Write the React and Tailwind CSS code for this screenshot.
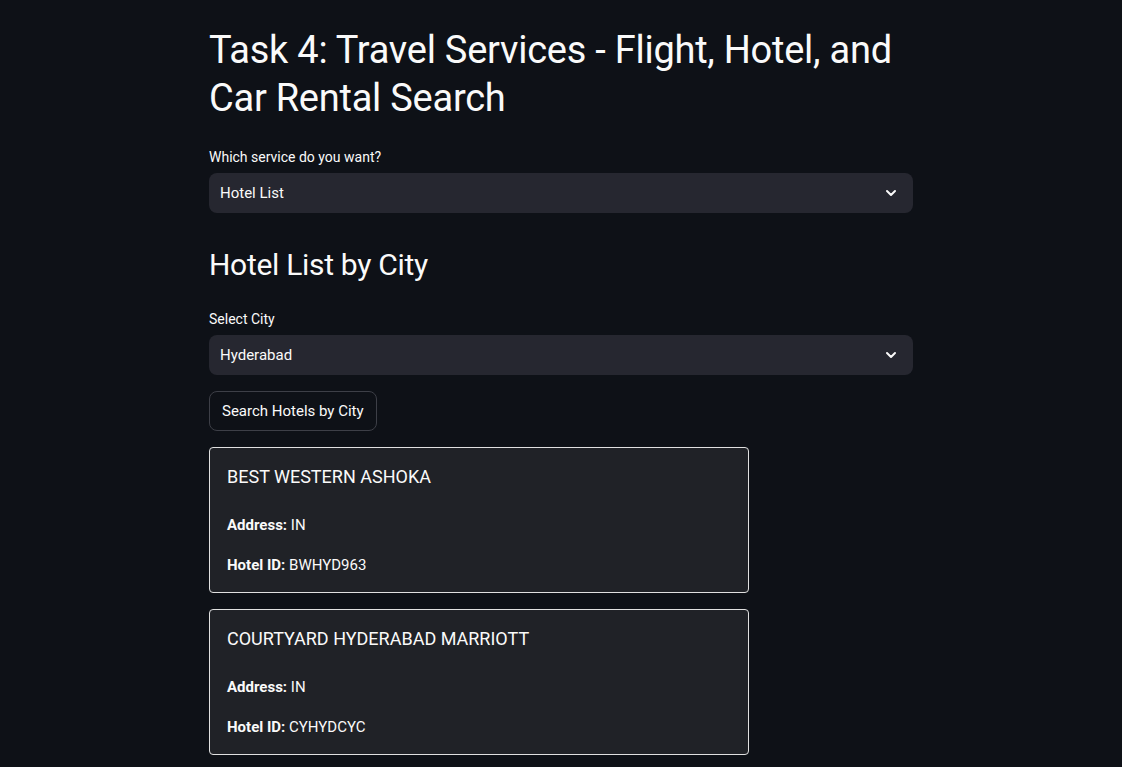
import React from 'react'
import { ChevronDown } from 'lucide-react'

const font = { fontFamily: 'Roboto, "Liberation Sans", sans-serif' }

function SelectBox({ label, value }) {
  return (
    <div className="flex flex-col">
      <label className="text-[14px] leading-[20px] text-[#fafafa] mb-[6px]">{label}</label>
      <div className="flex items-center justify-between h-[40px] rounded-lg bg-[#262730] pl-[11px] pr-[14px] text-[15px] text-[#fafafa]">
        <span>{value}</span>
        <ChevronDown className="w-[16px] h-[16px] text-[#fafafa]" strokeWidth={3} />
      </div>
    </div>
  )
}

function HotelCard({ name, address, id }) {
  return (
    <div className="w-[540px] rounded-[4px] border border-[#e0e0e0] bg-[#202227] px-[17px] pt-[15px] pb-[15px] text-[#fafafa]">
      <div className="text-[18px] leading-[28px]">{name}</div>
      <p className="mt-[22px] text-[15px] leading-[24px]">
        <b className="font-bold">Address:</b> {address}
      </p>
      <p className="mt-[16px] text-[15px] leading-[24px]">
        <b className="font-bold">Hotel ID:</b> {id}
      </p>
    </div>
  )
}

export default function App() {
  return (
    <div className="min-h-[767px] bg-[#0e1117] text-[#fafafa]" style={font}>
      <div className="w-[704px] ml-[209px] pt-[26px] pb-[20px]">
        {/* Title */}
        <h1 className="text-[38px] leading-[48px] font-normal tracking-[-0.25px]">
          Task 4: Travel Services - Flight, Hotel, and Car Rental Search
        </h1>

        <div className="mt-[25px]">
          <SelectBox label="Which service do you want?" value="Hotel List" />
        </div>

        <h2 className="mt-[30px] text-[30px] leading-[44px] font-normal tracking-[-0.3px]">Hotel List by City</h2>

        <div className="mt-[22px]">
          <SelectBox label="Select City" value="Hyderabad" />
        </div>

        <button className="mt-[16px] h-[40px] px-[12px] rounded-lg border border-[#3d3f47] bg-[#0e1117] text-[15px] text-[#fafafa]">
          Search Hotels by City
        </button>

        <div className="mt-[16px] flex flex-col gap-[16px]">
          <HotelCard name="BEST WESTERN ASHOKA" address="IN" id="BWHYD963" />
          <HotelCard name="COURTYARD HYDERABAD MARRIOTT" address="IN" id="CYHYDCYC" />
        </div>
      </div>
    </div>
  )
}
